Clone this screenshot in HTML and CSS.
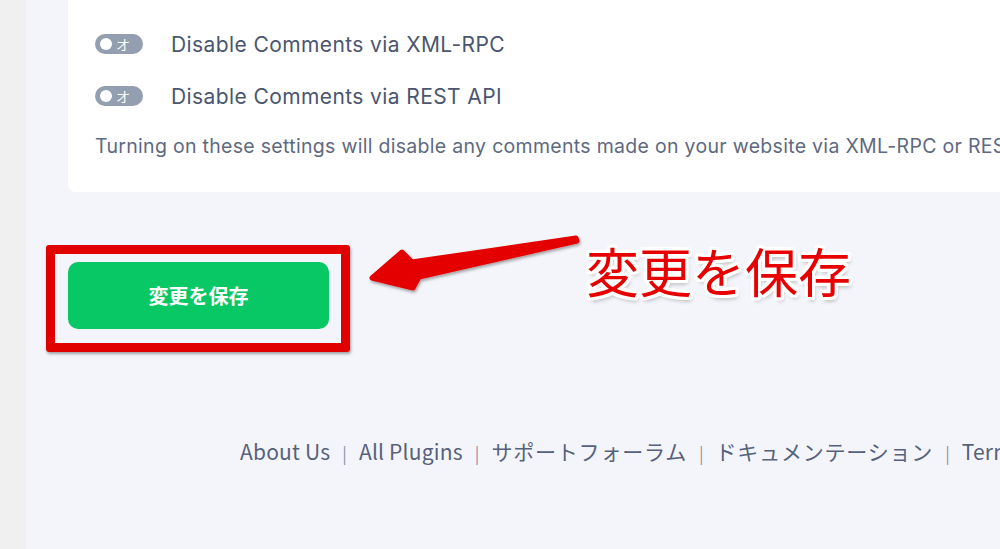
FILE: index.html
```html
<!DOCTYPE html>
<html lang="ja">
<head>
<meta charset="utf-8">
<link rel="stylesheet" href="styles.css">
</head>
<body>
<div class="page">
  <div class="sidebar"></div>
  <div class="main">
    <div class="card">
      <div class="row">
        <span class="toggle"><span class="knob"></span><span class="toggle-label">オ</span></span>
        <span class="row-label">Disable Comments via XML-RPC</span>
      </div>
      <div class="row">
        <span class="toggle"><span class="knob"></span><span class="toggle-label">オ</span></span>
        <span class="row-label">Disable Comments via REST API</span>
      </div>
      <p class="desc">Turning on these settings will disable any comments made on your website via XML-RPC or REST API.</p>
    </div>
    <div class="actions">
      <button class="save">変更を保存</button>
    </div>
    <div class="footer">
      <a class="lat">About Us</a><span class="sep">|</span><a class="lat">All Plugins</a><span class="sep">|</span><a class="ja">サポートフォーラム</a><span class="sep">|</span><a class="ja">ドキュメンテーション</a><span class="sep">|</span><a class="lat">Terms</a>
    </div>
  </div>
  <div class="frame"></div>
  <svg class="arrow" width="1000" height="549" viewBox="0 0 1000 549">
    <defs>
      <filter id="sh" x="-20%" y="-50%" width="140%" height="200%">
        <feDropShadow dx="1" dy="2" stdDeviation="1.5" flood-color="#000" flood-opacity="0.35"/>
      </filter>
    </defs>
    <polygon filter="url(#sh)" fill="#e50000" stroke="#e50000" stroke-width="5" stroke-linejoin="round"
      points="372,278 402,252 412,262 576,238 577,241 419,277 413,288"/>
  </svg>
  <div class="callout">変更を保存</div>
</div>
</body>
</html>
```
FILE: styles.css
```css
html, body {
  margin: 0;
  padding: 0;
}
body {
  width: 1000px;
  height: 549px;
  overflow: hidden;
  font-family: "Inter", "Noto Sans CJK JP", sans-serif;
}
.page {
  position: relative;
  display: flex;
  width: 1000px;
  height: 549px;
  overflow: hidden;
}
.sidebar {
  width: 26px;
  flex: none;
  background: #f0f0f1;
}
.main {
  flex: 1;
  background: #f4f5fa;
  padding-left: 42px;
  min-width: 0;
}
.card {
  background: #fff;
  margin-top: -20px;
  width: 1100px;
  border-radius: 8px;
  padding: 54px 0 34px 27px;
  box-sizing: border-box;
}
.row {
  display: flex;
  align-items: center;
  height: 20px;
  gap: 28px;
  margin-bottom: 32px;
}
.row + .row {
  margin-bottom: 28px;
}
.toggle {
  position: relative;
  width: 48px;
  height: 20px;
  border-radius: 10px;
  background: #939eb0;
  overflow: hidden;
  flex: none;
}
.knob {
  position: absolute;
  left: 5px;
  top: 4px;
  width: 12px;
  height: 12px;
  border-radius: 50%;
  background: #fff;
}
.toggle-label {
  position: absolute;
  left: 21px;
  top: 2px;
  font-family: "Noto Sans CJK JP", sans-serif;
  font-size: 14px;
  line-height: 16px;
  color: #fff;
  white-space: nowrap;
}
.row-label {
  font-size: 21px;
  color: #4a5670;
  white-space: nowrap;
  letter-spacing: 0.4px;
}
.desc {
  margin: 0;
  font-size: 19.5px;
  line-height: 24px;
  color: #5d6980;
  white-space: nowrap;
  letter-spacing: 0.3px;
}
.actions {
  margin-top: 70px;
}
.save {
  display: block;
  width: 261px;
  height: 67px;
  border: none;
  border-radius: 10px;
  background: #08c866;
  color: #fff;
  font-family: "Noto Sans CJK JP", sans-serif;
  font-weight: 700;
  font-size: 20px;
  padding: 0;
}
.footer {
  margin-top: 107px;
  padding-left: 172px;
  font-family: "Noto Sans CJK JP", sans-serif;
  font-size: 21px;
  line-height: 30px;
  color: #56627c;
  white-space: nowrap;
}
.footer a {
  color: #56627c;
}
.footer .lat {
  letter-spacing: 0.2px;
}
.footer .ja {
  letter-spacing: 0.8px;
}
.sep {
  display: inline-block;
  margin: 0 12px;
  color: #8a94a6;
  font-size: 17px;
}
.frame {
  position: absolute;
  left: 46px;
  top: 245px;
  width: 304px;
  height: 107px;
  box-sizing: border-box;
  border: 9px solid #e10000;
  border-radius: 3px;
  box-shadow: 1px 2px 3px rgba(0, 0, 0, 0.35);
}
.arrow {
  position: absolute;
  left: 0;
  top: 0;
}
.callout {
  position: absolute;
  left: 586px;
  top: 240px;
  font-family: "Noto Sans CJK JP", sans-serif;
  font-weight: 400;
  font-size: 53px;
  line-height: 60px;
  color: #e60000;
  white-space: nowrap;
  text-shadow:
    3px 0 0 #fff, -3px 0 0 #fff, 0 3px 0 #fff, 0 -3px 0 #fff,
    2px 2px 0 #fff, -2px 2px 0 #fff, 2px -2px 0 #fff, -2px -2px 0 #fff,
    3px 2px 0 #fff, -3px 2px 0 #fff, 3px -2px 0 #fff, -3px -2px 0 #fff,
    2px 3px 0 #fff, -2px 3px 0 #fff, 2px -3px 0 #fff, -2px -3px 0 #fff,
    2px 4px 4px rgba(0, 0, 0, 0.3);
}
```
